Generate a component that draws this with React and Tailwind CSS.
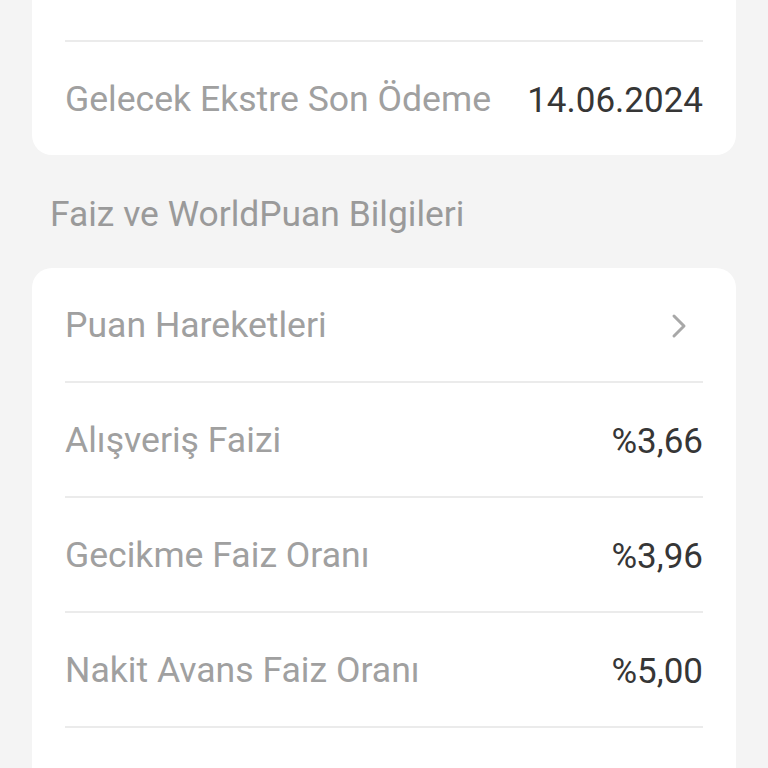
const TOP_ROWS = [
  { label: 'Son Ödeme Tarihi', value: '04.06.2024' },
  { label: 'Gelecek Ekstre Son Ödeme', value: '14.06.2024' },
]

const INFO_ROWS = [
  { label: 'Puan Hareketleri', chevron: true },
  { label: 'Alışveriş Faizi', value: '%3,66' },
  { label: 'Gecikme Faiz Oranı', value: '%3,96' },
  { label: 'Nakit Avans Faiz Oranı', value: '%5,00' },
]

function Chevron() {
  return (
    <svg width="18" height="26" viewBox="0 0 18 26" fill="none" className="mr-[15px]">
      <path d="M4 3 L14 13 L4 23" stroke="#a8a8a8" strokeWidth="3" strokeLinecap="round" strokeLinejoin="round" />
    </svg>
  )
}

function Row({ row, last }) {
  return (
    <>
      <div className="h-[113px] flex items-center justify-between pt-[3px]">
        <span className="text-[#a0a0a0] text-[35.6px]">{row.label}</span>
        {row.chevron ? <Chevron /> : <span className="text-[#363636]">{row.value}</span>}
      </div>
      {!last && <div className="h-[2px] bg-[#ebebeb]" />}
    </>
  )
}

export default function App() {
  return (
    <div
      className="h-[768px] overflow-hidden bg-[#f4f4f4] px-8 text-[35px] leading-none"
      style={{ fontFamily: 'Roboto, "Noto Sans", sans-serif' }}
    >
      <div className="-mt-[73px] bg-white rounded-[20px] px-[33px]">
        {TOP_ROWS.map((row, i) => (
          <Row key={row.label} row={row} last={i === TOP_ROWS.length - 1} />
        ))}
      </div>

      <div className="h-[113px] flex items-center pl-[18px] pt-[7px] text-[#9a9a9a] text-[35.4px]">
        Faiz ve WorldPuan Bilgileri
      </div>

      <div className="bg-white rounded-[20px] px-[33px] pb-[80px]">
        {INFO_ROWS.map((row) => (
          <Row key={row.label} row={row} last={false} />
        ))}
      </div>
    </div>
  )
}
